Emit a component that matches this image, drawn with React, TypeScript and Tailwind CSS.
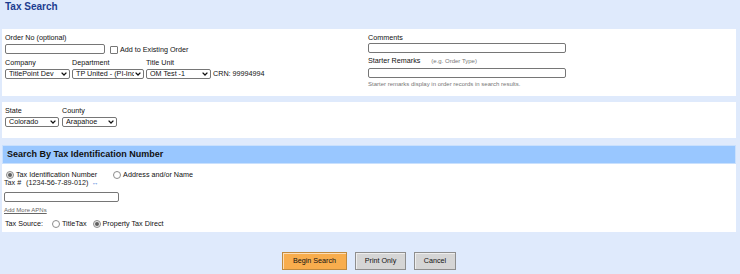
import { ReactNode } from "react";

const FONT = "font-['Liberation_Sans',Arial,sans-serif]";

function Chevron() {
    return (
        <svg
            className="pointer-events-none absolute right-[3px] top-[3px]"
            width="6"
            height="4"
            viewBox="0 0 6 4"
        >
            <polyline points="0.6,0.6 3,3 5.4,0.6" fill="none" stroke="#111" strokeWidth="1.3" />
        </svg>
    );
}

function Select({ value, width }: { value: string; width: string }) {
    return (
        <div className={`relative ${width}`}>
            <select
                defaultValue={value}
                className="block h-[10px] w-full appearance-none overflow-hidden rounded-[2px] border border-[#767676] bg-white pl-[3px] pr-[9px] text-[7.2px] leading-[8px] text-[#111] outline-none"
            >
                <option>{value}</option>
            </select>
            <Chevron />
        </div>
    );
}

function TextInput({ width }: { width: string }) {
    return (
        <input
            type="text"
            className={`block h-[10px] ${width} rounded-[2px] border border-[#767676] bg-white outline-none`}
        />
    );
}

function Radio({ checked, label }: { checked?: boolean; label: string }) {
    return (
        <label className="flex items-center gap-[2px]">
            <span
                className={`flex h-[8px] w-[8px] items-center justify-center rounded-full border border-[#8d8d8d] ${checked ? "bg-[#e9e9e9]" : "bg-white"}`}
            >
                {checked && <span className="h-[4px] w-[4px] rounded-full bg-[#5f5f5f]" />}
            </span>
            <span>{label}</span>
        </label>
    );
}

function Field({ label, children }: { label: ReactNode; children: ReactNode }) {
    return (
        <div className="flex flex-col">
            <span className="leading-[9px]">{label}</span>
            <div className="mt-[2px]">{children}</div>
        </div>
    );
}

function Button({ label, primary, width }: { label: string; primary?: boolean; width: string }) {
    return (
        <button
            className={`h-[18px] ${width} border text-[7.2px] text-[#111] shadow-[inset_1px_1px_0_rgba(255,255,255,0.6)] ${primary ? "border-[#c08a3e] bg-[#f8ad4d]" : "border-[#8e8e8e] bg-[#d5d5d5]"}`}
        >
            {label}
        </button>
    );
}

export default function App() {
    return (
        <div className={`h-[274px] w-[740px] overflow-hidden bg-[#dfeafc] pl-[2px] pr-[4px] text-[7.2px] text-[#111] ${FONT}`}>
            <div className="h-[29px] pl-[3px] pt-[1px] text-[10px] font-bold leading-[12px] text-[#1c3d90]">
                Tax Search
            </div>

            {/* order details */}
            <div className="grid h-[67px] grid-cols-[363px_1fr] bg-white px-[3px] pt-[4px]">
                <div className="flex flex-col">
                    <span className="leading-[9px]">Order No (optional)</span>
                    <div className="mt-[2px] flex items-end gap-[5px]">
                        <TextInput width="w-[100px]" />
                        <label className="flex items-end gap-[2px] leading-[8px]">
                            <span className="h-[8px] w-[8px] rounded-[1px] border border-[#767676] bg-white" />
                            <span>Add to Existing Order</span>
                        </label>
                    </div>
                    <div className="mt-[4px] flex items-end gap-[2px]">
                        <Field label="Company">
                            <Select value="TitlePoint Dev" width="w-[65px]" />
                        </Field>
                        <Field label="Department">
                            <Select value="TP United - (PI-Inc)" width="w-[72px]" />
                        </Field>
                        <Field label="Title Unit">
                            <Select value="OM Test -1" width="w-[65px]" />
                        </Field>
                        <span className="mb-[1px] leading-[9px]">CRN: 99994994</span>
                    </div>
                </div>
                <div className="flex flex-col">
                    <span className="leading-[9px]">Comments</span>
                    <div className="mt-[1px]">
                        <TextInput width="w-[198px]" />
                    </div>
                    <span className="mt-[3px] leading-[9px]">
                        Starter Remarks
                        <span className="ml-[11px] text-[6px] text-[#777]">(e.g. Order Type)</span>
                    </span>
                    <div className="mt-[2px]">
                        <TextInput width="w-[198px]" />
                    </div>
                    <span className="mt-[2px] text-[6px] leading-[8px] text-[#777]">
                        Starter remarks display in order records in search results.
                    </span>
                </div>
            </div>

            {/* location */}
            <div className="mt-[6px] flex h-[36px] gap-[3px] bg-white px-[3px] pt-[4px]">
                <Field label="State">
                    <Select value="Colorado" width="w-[54px]" />
                </Field>
                <Field label="County">
                    <Select value="Arapahoe" width="w-[55px]" />
                </Field>
            </div>

            {/* tax id search */}
            <div className="mt-[7px]">
                <div className="flex h-[19px] items-center border border-[#c9e0fd] bg-[#99c7ff] pl-[4px] text-[9px] font-bold text-[#111]">
                    Search By Tax Identification Number
                </div>
                <div className="h-[68px] bg-white pt-[7px]">
                    <div className="flex h-[8px] items-center gap-[16px] pl-[4px] leading-[8px]">
                        <Radio checked label="Tax Identification Number" />
                        <Radio label="Address and/or Name" />
                    </div>
                    <div className="flex pl-[2px] leading-[8px] text-[#222]">
                        <span className="w-[22px]">Tax #</span>
                        <span>(1234-56-7-89-012)</span>
                        <span className="ml-[3px] text-[#3c78d8]">↔</span>
                    </div>
                    <div className="mt-[5px] pl-[2px]">
                        <TextInput width="w-[115px]" />
                    </div>
                    <div className="mt-[4px] pl-[2px] text-[6px] leading-[8px] text-[#666] underline">
                        Add More APNs
                    </div>
                    <div className="mt-[5px] flex h-[9px] items-center pl-[3px] leading-[9px]">
                        <span className="w-[47px]">Tax Source:</span>
                        <div className="flex items-center gap-[6px]">
                            <Radio label="TitleTax" />
                            <Radio checked label="Property Tax Direct" />
                        </div>
                    </div>
                </div>
            </div>

            <div className="mt-[20px] flex justify-center gap-[8px]">
                <Button primary label="Begin Search" width="w-[65px]" />
                <Button label="Print Only" width="w-[51px]" />
                <Button label="Cancel" width="w-[42px]" />
            </div>
        </div>
    );
}
